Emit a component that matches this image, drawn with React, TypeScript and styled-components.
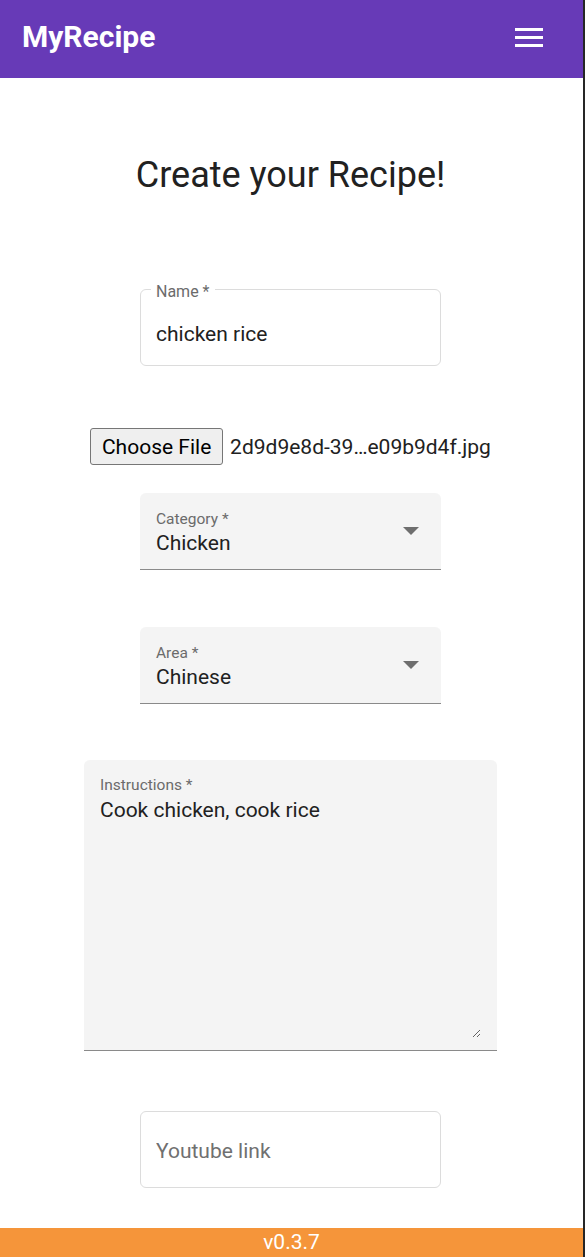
import React from 'react';
import styled, { createGlobalStyle } from 'styled-components';

const GlobalStyle = createGlobalStyle`
  html, body {
    margin: 0;
    padding: 0;
    background: #ffffff;
  }
  body {
    font-family: Roboto, "Liberation Sans", Arial, sans-serif;
  }
`;

function MenuIcon() {
  return (
    <svg width="28" height="19" viewBox="0 0 28 19" fill="#ffffff">
      <rect x="0" y="0" width="28" height="3" />
      <rect x="0" y="8" width="28" height="3" />
      <rect x="0" y="16" width="28" height="3" />
    </svg>
  );
}

function DropIcon() {
  return (
    <svg width="16" height="8" viewBox="0 0 16 8" fill="#6e6e6e">
      <path d="M0 0 L8 8 L16 0 Z" />
    </svg>
  );
}

type SelectProps = {
  label: string;
  value: string;
};

function FilledSelect({ label, value }: SelectProps) {
  return (
    <FilledBox>
      <FilledLabel>{label}</FilledLabel>
      <FilledValue>{value}</FilledValue>
      <ArrowWrap>
        <DropIcon />
      </ArrowWrap>
    </FilledBox>
  );
}

export default function App() {
  return (
    <Page>
      <GlobalStyle />
      <Header>
        <Brand>MyRecipe</Brand>
        <MenuButton>
          <MenuIcon />
        </MenuButton>
      </Header>
      <Main>
        <Title>Create your Recipe!</Title>

        <Outlined $top={85} $height={85}>
          <Legend>
            <LegendText>Name *</LegendText>
          </Legend>
          <OutlinedInput $offset={24} defaultValue="chicken rice" />
        </Outlined>

        <FileRow>
          <FileButton type="button">Choose File</FileButton>
          <FileName>2d9d9e8d-39…e09b9d4f.jpg</FileName>
        </FileRow>

        <SelectSlot $top={28}>
          <FilledSelect label="Category *" value="Chicken" />
        </SelectSlot>

        <SelectSlot $top={57}>
          <FilledSelect label="Area *" value="Chinese" />
        </SelectSlot>

        <TextAreaBox>
          <FilledLabel>Instructions *</FilledLabel>
          <TextArea defaultValue="Cook chicken, cook rice" />
        </TextAreaBox>

        <Outlined $top={60} $height={77}>
          <OutlinedInput $offset={26} placeholder="Youtube link" />
        </Outlined>
      </Main>
      <Footer>v0.3.7</Footer>
    </Page>
  );
}

const Page = styled.div`
  width: 583px;
  min-height: 100vh;
  border-right: 2px solid #262626;
  display: flex;
  flex-direction: column;
  color: rgba(0, 0, 0, 0.87);
`;

const Header = styled.header`
  height: 78px;
  background: #673ab7;
  display: flex;
  align-items: center;
  justify-content: space-between;
  padding: 0 40px 0 22px;
  box-sizing: border-box;
`;

const Brand = styled.div`
  color: #ffffff;
  font-size: 30px;
  font-weight: 700;
  margin-top: -6px;
`;

const MenuButton = styled.div`
  display: flex;
  align-items: center;
  margin-top: -4px;
`;

const Main = styled.main`
  flex: 1;
  display: flex;
  flex-direction: column;
  align-items: center;
  padding: 0 2px 40px 0;
`;

const Title = styled.h1`
  margin: 76px 0 0 0;
  font-size: 36px;
  font-weight: 400;
  line-height: 42px;
  color: #212121;
`;

const Outlined = styled.fieldset<{ $top: number; $height: number }>`
  margin: ${(p) => p.$top}px 0 0 0;
  width: 301px;
  height: ${(p) => p.$height}px;
  box-sizing: border-box;
  border: 1px solid #dcdcdc;
  border-radius: 6px;
  padding: 0 15px;
  min-width: 0;
`;

const Legend = styled.legend`
  font-size: 16px;
  line-height: 16px;
  color: #6b6b6b;
  padding: 0 5px;
  margin-left: -5px;
`;

const LegendText = styled.span`
  position: relative;
  top: 3px;
`;

const OutlinedInput = styled.input<{ $offset: number }>`
  display: block;
  border: none;
  outline: none;
  background: transparent;
  width: 100%;
  height: 26px;
  padding: 0;
  margin: ${(p) => p.$offset}px 0 0 0;
  font-family: Roboto, "Liberation Sans", Arial, sans-serif;
  font-size: 21px;
  color: #212121;

  &::placeholder {
    color: #707070;
  }
`;

const FileRow = styled.div`
  margin-top: 62px;
  display: flex;
  align-items: center;
  gap: 7px;
`;

const FileButton = styled.button`
  width: 133px;
  height: 37px;
  box-sizing: border-box;
  background: #efefef;
  border: 1px solid #767676;
  border-radius: 3px;
  font-family: Roboto, "Liberation Sans", Arial, sans-serif;
  font-size: 21px;
  color: #000000;
  padding: 0;
`;

const FileName = styled.span`
  font-size: 21px;
  color: #212121;
`;

const SelectSlot = styled.div<{ $top: number }>`
  margin-top: ${(p) => p.$top}px;
`;

const FilledBox = styled.div`
  position: relative;
  width: 301px;
  height: 77px;
  box-sizing: border-box;
  background: #f4f4f4;
  border-radius: 6px 6px 0 0;
  border-bottom: 1px solid #8a8a8a;
  padding: 17px 16px 0 16px;
  display: flex;
  flex-direction: column;
`;

const FilledLabel = styled.div`
  font-size: 15.5px;
  line-height: 18px;
  color: #6b6b6b;
`;

const FilledValue = styled.div`
  font-size: 21px;
  line-height: 26px;
  margin-top: 2px;
  color: #212121;
`;

const ArrowWrap = styled.div`
  position: absolute;
  right: 22px;
  top: 34px;
  display: flex;
`;

const TextAreaBox = styled.div`
  margin-top: 56px;
  width: 413px;
  height: 291px;
  box-sizing: border-box;
  background: #f4f4f4;
  border-radius: 6px 6px 0 0;
  border-bottom: 1px solid #8a8a8a;
  padding: 16px 16px 12px 16px;
  display: flex;
  flex-direction: column;
`;

const TextArea = styled.textarea`
  flex: 1;
  border: none;
  outline: none;
  background: transparent;
  padding: 0;
  margin: 3px 0 0 0;
  font-family: Roboto, "Liberation Sans", Arial, sans-serif;
  font-size: 21px;
  line-height: 26px;
  color: #212121;
  resize: vertical;
`;

const Footer = styled.footer`
  height: 29px;
  background: #f5953a;
  color: #ffffff;
  font-size: 21px;
  line-height: 29px;
  text-align: center;
`;
